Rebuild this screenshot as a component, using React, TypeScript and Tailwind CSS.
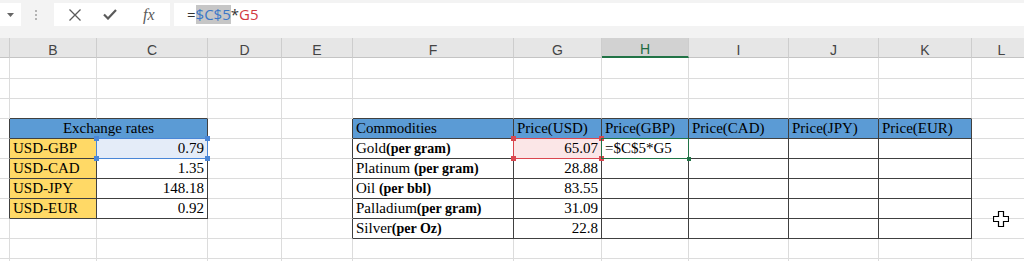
import type { ReactNode } from "react";

type Sel = "blue" | "red" | "green";

interface CellData {
	text?: ReactNode;
	align?: "l" | "r" | "c";
	bg?: string;
	sel?: Sel;
}

const LETTERS = ["", "B", "C", "D", "E", "F", "G", "H", "I", "J", "K", "L"];
const WIDTHS = [
	"w-[10px]",
	"w-[87px]",
	"w-[111px]",
	"w-[74px]",
	"w-[71px]",
	"w-[161px]",
	"w-[88px]",
	"w-[87px]",
	"w-[100px]",
	"w-[90px]",
	"w-[93px]",
	"w-[60px]",
];

const BORDER: Record<string, string> = {
	"00": "border-r border-b border-r-[#dcdcdc] border-b-[#dcdcdc]",
	"10": "border-r border-b border-r-[#404040] border-b-[#dcdcdc]",
	"01": "border-r border-b border-r-[#dcdcdc] border-b-[#404040]",
	"11": "border-r border-b border-r-[#404040] border-b-[#404040]",
};

const ALIGN = { l: "justify-start", r: "justify-end", c: "justify-center" };

const BLUE = "bg-[#5b9bd5]";
const GOLD = "bg-[#ffd966]";

function Unit({ name, unit }: { name: string; unit: string }) {
	return (
		<>
			{name}
			<span className="text-[14px] font-bold">{unit}</span>
		</>
	);
}

// sheet rows 1..11, columns A..L (index 0..11)
const DATA: Record<number, Record<number, CellData>> = {
	4: {
		1: { text: "Exchange rates", align: "c", bg: BLUE },
		5: { text: "Commodities", bg: BLUE },
		6: { text: "Price(USD)", bg: BLUE },
		7: { text: "Price(GBP)", bg: BLUE },
		8: { text: "Price(CAD)", bg: BLUE },
		9: { text: "Price(JPY)", bg: BLUE },
		10: { text: "Price(EUR)", bg: BLUE },
	},
	5: {
		1: { text: "USD-GBP", bg: GOLD },
		2: { text: "0.79", align: "r", bg: "bg-[#e4ecf8]", sel: "blue" },
		5: { text: <Unit name="Gold" unit="(per gram)" /> },
		6: { text: "65.07", align: "r", bg: "bg-[#fbe6e7]", sel: "red" },
		7: { text: "=$C$5*G5", sel: "green" },
	},
	6: {
		1: { text: "USD-CAD", bg: GOLD },
		2: { text: "1.35", align: "r" },
		5: { text: <Unit name="Platinum " unit="(per gram)" /> },
		6: { text: "28.88", align: "r" },
	},
	7: {
		1: { text: "USD-JPY", bg: GOLD },
		2: { text: "148.18", align: "r" },
		5: { text: <Unit name="Oil " unit="(per bbl)" /> },
		6: { text: "83.55", align: "r" },
	},
	8: {
		1: { text: "USD-EUR", bg: GOLD },
		2: { text: "0.92", align: "r" },
		5: { text: <Unit name="Palladium" unit="(per gram)" /> },
		6: { text: "31.09", align: "r" },
	},
	9: {
		5: { text: <Unit name="Silver" unit="(per Oz)" /> },
		6: { text: "22.8", align: "r" },
	},
};

const inTable = (r: number, c: number) =>
	(r >= 4 && r <= 8 && (c === 1 || c === 2)) ||
	(r >= 4 && r <= 9 && c >= 5 && c <= 10);

function Overlay({ sel }: { sel: Sel }) {
	if (sel === "green") {
		return (
			<div className="pointer-events-none absolute -inset-px z-10 border border-[#217346]">
				<div className="absolute -right-[3px] -bottom-[3px] h-[4px] w-[4px] bg-[#217346]" />
			</div>
		);
	}
	const line = sel === "blue" ? "border-[#4a86d6]" : "border-[#d9474f]";
	const dot = sel === "blue" ? "bg-[#4a86d6]" : "bg-[#d9474f]";
	return (
		<div className={`pointer-events-none absolute -inset-px z-10 border ${line}`}>
			<div className={`absolute -left-[3px] -top-[3px] h-[5px] w-[5px] ${dot}`} />
			<div className={`absolute -right-[3px] -top-[3px] h-[5px] w-[5px] ${dot}`} />
			<div className={`absolute -left-[3px] -bottom-[3px] h-[5px] w-[5px] ${dot}`} />
			<div className={`absolute -right-[3px] -bottom-[3px] h-[5px] w-[5px] ${dot}`} />
		</div>
	);
}

function Row({ r }: { r: number }) {
	const height = r === 1 ? "h-[21px]" : "h-[20px]";
	const cells: ReactNode[] = [];
	for (let c = 0; c < 12; c++) {
		const merged = r === 4 && c === 1;
		if (r === 4 && c === 2) continue;
		const last = merged ? 2 : c;
		const rd = inTable(r, last) || inTable(r, last + 1);
		const bd = inTable(r, c) || inTable(r + 1, c);
		const d = DATA[r]?.[c] ?? {};
		cells.push(
			<div
				key={c}
				className={`relative box-border flex shrink-0 items-end whitespace-nowrap px-[3px] leading-[19px] ${
					merged ? "w-[198px]" : WIDTHS[c]
				} ${height} ${BORDER[`${rd ? 1 : 0}${bd ? 1 : 0}`]} ${d.bg ?? ""} ${
					ALIGN[d.align ?? "l"]
				}`}
			>
				{d.sel && <Overlay sel={d.sel} />}
				{d.text && <span>{d.text}</span>}
			</div>,
		);
	}
	return <div className="flex">{cells}</div>;
}

function FormulaBar() {
	return (
		<div className="flex h-[38px] items-start bg-[#f3f3f3] pt-[3px]">
			<div className="flex h-[23px] w-[21px] items-center justify-center bg-white">
				<svg width="7" height="4" viewBox="0 0 7 4">
					<path d="M0 0h7L3.5 4z" fill="#666" />
				</svg>
			</div>
			<div className="flex h-[23px] w-[33px] items-center justify-center pr-[3px]">
				<svg width="2" height="10" viewBox="0 0 2 10">
					<rect x="0" y="0" width="2" height="2" fill="#b4b4b4" />
					<rect x="0" y="4" width="2" height="2" fill="#b4b4b4" />
					<rect x="0" y="8" width="2" height="2" fill="#b4b4b4" />
				</svg>
			</div>
			<div className="flex h-[23px] w-[116px] items-center bg-white pl-[15px]">
				<svg width="12" height="12" viewBox="0 0 12 12">
					<path d="M0.5 0.5l11 11M11.5 0.5l-11 11" stroke="#5a5a5a" strokeWidth="1.3" />
				</svg>
				<svg className="ml-[22px]" width="14" height="11" viewBox="0 0 14 11">
					<path d="M1 5.5l4 4L13 1" stroke="#5a5a5a" strokeWidth="2.2" fill="none" />
				</svg>
				<span className="ml-[26px] font-['Liberation_Serif',serif] text-[16px] italic leading-none text-[#5a5a5a]">
					fx
				</span>
			</div>
			<div className="ml-[4px] flex h-[23px] flex-1 items-start bg-white pl-[13px] pt-[2px] font-['Open_Sans',sans-serif] text-[15px] leading-[19px]">
				<span className="text-[#333]">=</span>
				<span className="bg-[#c6c6c6] text-[#3b78c8]">$C$5</span>
				<span className="text-[#333]">*</span>
				<span className="text-[#d2393f]">G5</span>
			</div>
		</div>
	);
}

function ColumnHeaders() {
	return (
		<div className="flex bg-[#e6e6e6] font-['Liberation_Sans',sans-serif] text-[14px] leading-[14px] text-[#444]">
			{LETTERS.map((l, i) => (
				<div
					key={i}
					className={`box-border flex h-[20px] shrink-0 items-end justify-center border-r border-r-[#cdcdcd] ${WIDTHS[i]} ${
						l === "H"
							? "border-b-2 border-b-[#217346] bg-[#d2d2d2] text-[#1e6b41]"
							: "border-b border-b-[#c4c4c4]"
					}`}
				>
					{l}
				</div>
			))}
		</div>
	);
}

export default function App() {
	return (
		<div className="relative h-[261px] w-[1024px] overflow-hidden bg-white">
			<FormulaBar />
			<ColumnHeaders />
			<div className="font-['Liberation_Serif',serif] text-[15px] text-black">
				{[1, 2, 3, 4, 5, 6, 7, 8, 9, 10, 11].map((r) => (
					<Row key={r} r={r} />
				))}
			</div>
			<svg
				className="absolute left-[993px] top-[211px]"
				width="16"
				height="16"
				viewBox="0 0 16 16"
			>
				<path
					d="M5.5 0.5h5v5h5v5h-5v5h-5v-5h-5v-5h5z"
					fill="#fff"
					stroke="#000"
					strokeWidth="1.2"
				/>
			</svg>
		</div>
	);
}
